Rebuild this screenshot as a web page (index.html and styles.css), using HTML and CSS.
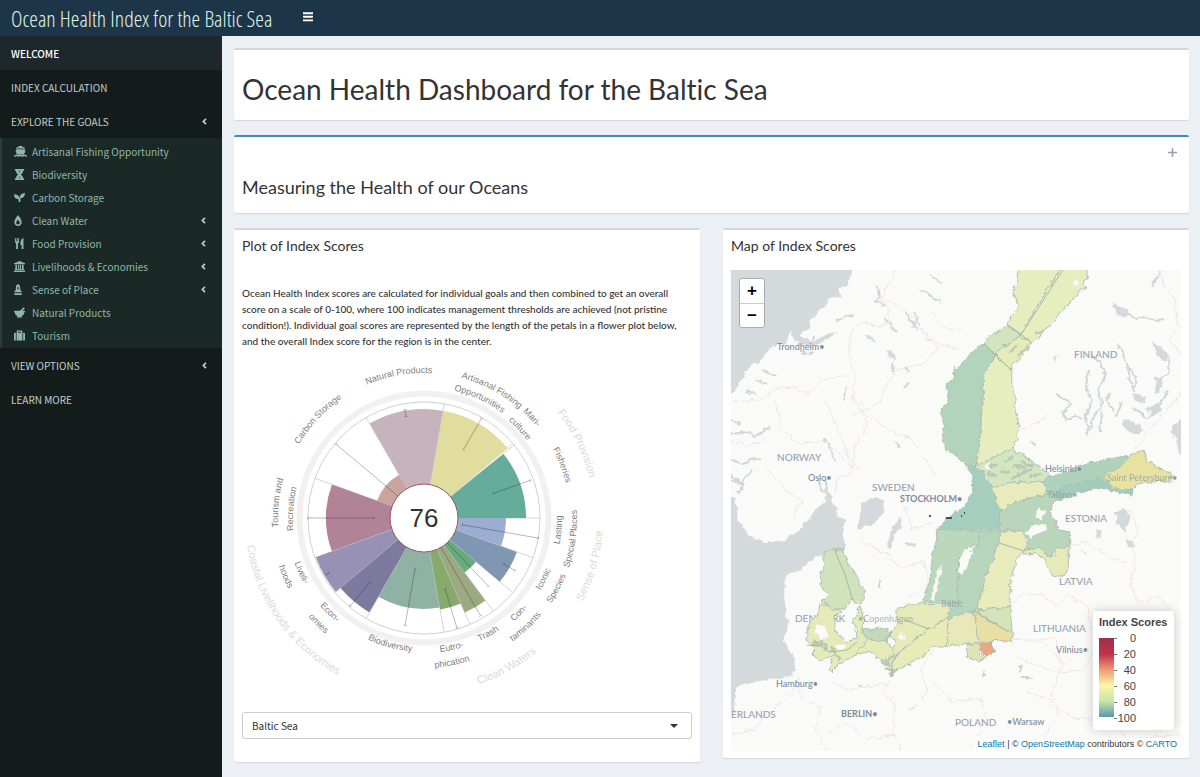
FILE: index.html
```html
<!DOCTYPE html>
<html lang="en">
  <head>
    <meta charset="UTF-8" />
    <title>Ocean Health Index for the Baltic Sea</title>
    <meta name="viewport" content="width=device-width, initial-scale=1.0" />
    <link rel="stylesheet" href="styles.css">
  </head>
  <body>
    <header class="main-header">
      <a href="#" class="logo">Ocean Health Index for the Baltic Sea</a>
      <button class="sidebar-toggle" aria-label="Toggle navigation">
        <svg width="10" height="10" viewBox="0 0 10 10"><path d="M0 1.2h10M0 4.8h10M0 8.4h10" stroke="#fff" stroke-width="1.9" /></svg>
      </button>
    </header>

    <div class="wrapper">
      <nav class="sidebar">
        <a href="#" class="item active">WELCOME</a>
        <a href="#" class="item">INDEX CALCULATION</a>
        <a href="#" class="item">EXPLORE THE GOALS <svg class="angle" viewBox="0 0 6 8"><path d="M4.8 .8 1.6 4l3.2 3.2" /></svg></a>
        <div class="submenu">
          <a href="#"><svg class="icon wide" viewBox="0 0 14 12"><path d="M5 0h4v1.4h2.4v3L12.600 5.300 11 8.600Q9.500 9.800 8.600 8.700 7 10 5.400 8.700 4.500 9.800 3 8.600L1.400 5.300 2.600 4.400v-3H5zM4 2.800v1.200L7 3.200l3 .8V2.800zM0 10q2 0 3-1 2 1.800 4 0 2 1.800 4 0 1 1 3 1v1.700q-2 0-3-.8-2 1.500-4 0-2 1.500-4 0-1 .8-3 .8z" fill-rule="evenodd" /></svg>Artisanal Fishing Opportunity</a>
          <a href="#"><svg class="icon" viewBox="0 0 12 12"><path d="M1 0h10v1.800H1zM1 10.200h10V12H1zM2 1.500h2l2 2.600 2-2.600h2Q10 4.500 7.500 6 10 7.500 10 10.500H8L6 7.800 4 10.500H2Q2 7.500 4.500 6 2 4.500 2 1.500zM4 2.500h4v.8H4zM4 8.800h4v.8H4z" /></svg>Biodiversity</a>
          <a href="#"><svg class="icon" viewBox="0 0 12 12"><path d="M0 2.500q4.800 0 6 4Q6.500 1.200 12 1q0 5.200-5 5.800V11H5V7.800Q0 7.800 0 2.500z" /></svg>Carbon Storage</a>
          <a href="#"><svg class="icon narrow" viewBox="0 0 8 12"><path d="M4 0q4 5 4 7.600A4 4 0 0 1 4 12 4 4 0 0 1 0 7.600Q0 5 4 0zM4 5.200Q2 7.200 2 8.300A2 2 0 0 0 4 10.300 2 2 0 0 0 6 8.300Q6 7.200 4 5.200z" fill-rule="evenodd" /></svg>Clean Water <svg class="angle" viewBox="0 0 6 8"><path d="M4.800 .8 1.600 4l3.200 3.200" /></svg></a>
          <a href="#"><svg class="icon" viewBox="0 0 12 12"><path d="M1 0h1v3.500h.8V0h1v3.500h.8V0h1v4.500L4.300 6v6H2.300V6L1 4.500zM7 6.500Q7 1 10.300 0v12H8.300V7.500H7z" /></svg>Food Provision <svg class="angle" viewBox="0 0 6 8"><path d="M4.800 .8 1.600 4l3.200 3.200" /></svg></a>
          <a href="#"><svg class="icon" viewBox="0 0 12 12"><path d="M6 0l6 2.500v1H0v-1zM1.500 4.200h1.800V9h1.200V4.200h1.200V9h.8V4.200h1.200V9h1V4.200h1.800V9h.8v1H.7V9h.8zM0 10.600h12V12H0z" /></svg>Livelihoods &amp; Economies <svg class="angle" viewBox="0 0 6 8"><path d="M4.800 .8 1.600 4l3.200 3.200" /></svg></a>
          <a href="#"><svg class="icon narrow" viewBox="0 0 8 12"><path d="M4 0l2 1.500.8 6H8V9H0V7.500h1.200L2 1.500zM0 10h8v2H0zM3.300 3.500v2.200h1.400V3.500z" fill-rule="evenodd" /></svg>Sense of Place <svg class="angle" viewBox="0 0 6 8"><path d="M4.800 .8 1.600 4l3.200 3.200" /></svg></a>
          <a href="#"><svg class="icon" viewBox="0 0 12 12"><path d="M0 4h6.500L10.600.300l1.200 1.200L9.200 4H12v1.600h-.7Q11 8.500 8.300 9.800L9 11.500H3l.7-1.700Q1 8.500.7 5.600H0z" /></svg>Natural Products</a>
          <a href="#"><svg class="icon" viewBox="0 0 12 12"><path d="M3 3V.600h6V3h.2v8.500H2.800V3zM4.300 3h3.400V1.800H4.300zM0 4q0-1 1-1h1v8.500H1q-1 0-1-1zM12 4q0-1-1-1h-1v8.500h1q1 0 1-1z" fill-rule="evenodd" /></svg>Tourism</a>
        </div>
        <a href="#" class="item">VIEW OPTIONS <svg class="angle" viewBox="0 0 6 8"><path d="M4.800 .8 1.600 4l3.200 3.200" /></svg></a>
        <a href="#" class="item">LEARN MORE</a>
      </nav>

      <main class="content">
        <section class="box title-box">
          <h1>Ocean Health Dashboard for the Baltic Sea</h1>
        </section>

        <section class="box measure-box">
          <button class="collapse" aria-label="Expand">
            <svg width="9" height="9" viewBox="0 0 9 9"><path d="M4.500 0v9M0 4.500h9" stroke="#97a0b3" stroke-width="1.600" /></svg>
          </button>
          <h2>Measuring the Health of our Oceans</h2>
        </section>

        <div class="row">
          <section class="box plot-box">
            <h3>Plot of Index Scores</h3>
            <p>
              Ocean Health Index scores are calculated for individual goals and then combined to get an overall
              score on a scale of 0-100, where 100 indicates management thresholds are achieved (not pristine
              condition!). Individual goal scores are represented by the length of the petals in a flower plot below,
              and the overall Index score for the region is in the center.
            </p>
            <svg id="flower" class="flower" viewBox="-182 -169 450 363"></svg>
            <select class="region" aria-label="Region">
              <option>Baltic Sea</option>
            </select>
          </section>

          <section class="box map-box">
            <h3>Map of Index Scores</h3>
            <div class="map">
              <svg class="tiles" viewBox="731 270 450 481" preserveAspectRatio="xMidYMid slice">
                <defs>
                  <filter id="rough" x="-5%" y="-5%" width="110%" height="110%">
                    <feTurbulence type="fractalNoise" baseFrequency="0.16" numOctaves="3" seed="4" />
                    <feDisplacementMap in="SourceGraphic" scale="6" xChannelSelector="R" yChannelSelector="G" />
                  </filter>
                </defs>

                <!-- open water and lakes -->
                <g fill="#d4dadc" filter="url(#rough)">
                  <path d="M721 260H855L850 278 846 285 838 290 841 296 830 298 827 305 820 310 812 318 808 328 800 336 812 342 826 334 838 332 826 340 814 346 806 345 795 341 790 332 786 343 777 345 766 352 758 362 749 368 743 378 735 390 721 400z" />
                  <path d="M721 494 735 498 738 520 748 535 765 542 785 540 800 530 815 512 825 500 828 488 832 500 838 515 845 520 843 535 846 547 824 553 812 560 800 570 787 575 783 590 784 605 788 625 784 642 793 655 797 670 790 677 770 680 750 682 736 688 735 712 721 715z" />
                  <path d="M860 503 873 498 885 500 884 512 875 522 868 525 858 530 860 515zM900 517l3 3-8 15-5 14-3-4 6-17z" />
                  <path d="M1115 511l13-1 2 10-4 13-8-8zM1125 537l9 5 2 6-8-1zM1190 412l-17 13-3 6 6 8 2 14 12 4zM1096 530h4l1 6-3 3z" />
                  <path d="M1112 303l8 4 9 4-3 6-10-2zM1152 342l8 5 9 8-3 7-8-6zM1132 393l10 4 6 1-4 5-8-2zM1156 376l6 4-2 12-5 2zM1146 408l12-4 4 5-10 5zM1124 420l10 2 10 8-4 4-10 0-6-8zM886 350l10 4 1 8-8-4zM894 440l8 6-5 2zM1054 355l4 2-3 6z" />
                </g>
                <g class="lakes" filter="url(#rough)">
                  <path d="M1127 313l9 6 8-2 12 4 8-2M1090 354l10 8 6 14-8 14 4 14-10 16-4 16-2-20 6-16-6-12 2-18M1118 344l6 12 4 10 2 16 6 10M1128 366l8 12-2 14M1160 380l8-6 2-18M1056 395l16 8-10 10 4 8 8-6 8 4M1110 392l-4 10 8 8M1102 410l-2 22M1122 402l-6 14M1134 408l12 10 16-8M1168 392l-14 20" />
                  <path d="M877 285l3 10-4 6 10 6M905 312l12 18M918 316l-6 12M919 325l-4-12M884 318l12 14M866 335l8 6M892 362l2 10M905 367l4 6M905 388l4-6M847 385l-3 16M824 438l8 14 4 10M731 434l16-2 8 4 16-8M731 460l12 4 8-4 10-2M731 475l10 8 10-12M738 495l6-12-12-3M825 480l3 14-6-6M818 478l4 12M731 420l10 4M756 380l12 4M762 370l14 6M746 392l10 2M930 275l12 8M920 288l20 14M1160 272l-8 14M814 336l-2 10M836 320l18-6M800 352l12 2" />
                  <path d="M880 580l-1 8M905 543l10 2M860 685l2 3M1020 665v8M1022 678h10M984 670v6M968 435l2 6M1030 440l5 6M1083 550l2 3" />
                </g>
                <!-- country borders -->
                <g class="borders" filter="url(#rough)">
                  <path d="M895 270l-14 29 7 8 1 16-10 4-18-6-10 12-2 22 6 20-2 24 10 14 4 12-12 22-4 26-14 6-2 14" />
                  <path d="M731 402l30-2 14-12 20-1 14 8 12-16 30-3M851 395l10 8 8 14 22 14 20 8 26 38M886 300l16 8 14 12 12 20 32 10M914 320l24 28-14 16-26 5-10 12-8 22-28 12M776 400l4 26 18 18 26-4 14 12 16 18M826 400l12 30 10 26 12 14M728 440l20 6 18-6M768 470l20 22 14 8-10 16" />
                  <path d="M1160 272l4 14 10 12 4 30-8 12 11 14M1181 393l-28 34-25 30M1020 430l20-8 8-8M930 310l14 18 18 2M1130 510l8 20-4 14 0 24-4 18 8 16 22-6 16 22M1068 546l18-4 10 6 14 10 16 4M1012 606l8-10 22-2 14 12 12-10 20 10 2 24M1013 638l30 4 22 22-10 8-38-14M1036 640l20-2 6 30-10 24 6 20-14 26M1058 672l26-2 12-20" />
                  <path d="M889 680l-6 12 12 14-2 26 8 20M797 674l4 24 20 10-6 20 12 22M731 735l24-6 10-14 26-20 8-18M830 680l16 10 40-6M826 735l20-12 22 16 30-4M932 680l20 22 28-4 6 20-14 30M940 640l-20 30 8 22-20 20M1050 700l22 18 40 2 16 20 53-6M1020 690l32 10M890 560l14 8 20-8 4 24-20 14M860 540l30 16M902 500l10 30 20-8" />
                </g>

                <g class="labels">
                  <text x="777" y="350" class="city">Trondheim•</text>
                  <text x="777" y="461">NORWAY</text>
                  <text x="808" y="481" class="city">Oslo•</text>
                  <text x="872" y="491">SWEDEN</text>
                  <text x="900" y="502" class="capital">STOCKHOLM•</text>
                  <text x="1074" y="358">FINLAND</text>
                  <text x="1065" y="522">ESTONIA</text>
                  <text x="1059" y="585">LATVIA</text>
                  <text x="1033" y="632">LITHUANIA</text>
                  <text x="1056" y="653" class="city">Vilnius•</text>
                  <text x="955" y="726">POLAND</text>
                  <text x="1007" y="725" class="city">•Warsaw</text>
                  <text x="841" y="717" class="capital">BERLIN•</text>
                  <text x="776" y="687" class="city">Hamburg•</text>
                  <text x="731" y="718">ERLANDS</text>
                  <text x="795" y="622">DENMARK</text>
                </g>

                <!-- scored sea regions -->
                <g class="regions" filter="url(#rough)">
                  <path fill="#e6eec0" d="M1020 262 1017 275 1018 282 1012 288 1014 296 1019 303 1016 311 1010 317 1008 325 1020 335 1064 262z" />
                  <path fill="#e6eec0" d="M1064 262 1087 262 1087 276 1084 284 1087 288 1080 290 1076 296 1071 300 1068 306 1061 311 1057 318 1050 326 1043 330 1040 337 1031 342 1020 335z" />
                  <path fill="#d2e5bf" d="M1008 325 998 332 990 336 984 343 995 355 1003 346 1020 336z" />
                  <path fill="#e6ecb8" d="M1020 336 1031 342 1028 350 1022 356 1013 364 1011 371 995 355 1003 346z" />
                  <path fill="#b2d4bc" d="M984 343 978 348 970 354 964 362 956 371 953 366 955 378 946 385 948 397 941 413 944 425 942 438 947 450 955 455 963 462 968 466 976 466 981 430 982 400 984 375 995 355z" />
                  <path fill="#e6eec0" d="M984 375 995 355 1011 371 1012 382 1015 395 1015 410 1019 425 1017 440 1013 448 976 466 981 430 982 400z" />
                  <path fill="#d4e6c0" d="M976 466 1013 448 1016 453 1028 457 1036 465 1045 470 1050 476 1044 482 1020 482 992 487 985 477z" />
                  <path fill="#a6cebe" d="M966 465 976 466 985 477 992 487 1000 512 1000 530 975 530 937 529 945 520 955 512 965 507 968 500 972 492 973 478z" />
                  <path fill="#e8ecbc" d="M992 487 1020 482 1043 482 1048 494 1030 498 1012 503 1000 512z" />
                  <path fill="#b0d2bc" d="M1043 482 1050 476 1062 474 1075 468 1090 463 1105 460 1120 457 1130 455 1122 466 1104 477 1085 481 1065 486 1048 494z" />
                  <path fill="#a2ccbc" d="M1048 494 1065 486 1085 481 1104 478 1112 489 1133 490 1132 495 1120 493 1108 490 1090 489 1078 493 1070 498 1060 500z" />
                  <path fill="#e8e2a0" d="M1104 476 1122 466 1130 455 1144 451 1147 460 1155 466 1170 472 1175 478 1165 481 1150 482 1137 484 1133 490 1112 488z" />
                  <path fill="#b9d6bc" d="M1000 512 1014 502 1048 494 1062 500 1053 503 1050 512 1055 520 1058 530 1071 532 1069 547 1056 548 1053 556 1048 557 1040 547 1024 551 1028 544 1020 531 1000 531z" />
                  <path fill="#bcd8bc" d="M937 529 978 531 979 545 972 546 958 560 958 602 930 602 922 602 930 580 932 560 936 540z" />
                  <path fill="#b6d6bc" d="M978 531 1000 531 999 543 986 576 976 610 965 612 950 618 949 602 958 602 958 560 979 545z" />
                  <path fill="#e8ecbc" d="M1000 531 1020 531 1028 540 1024 551 1016 560 1012 575 1010 590 1010 607 976 610 986 576 999 543z" />
                  <path fill="#e6eab8" d="M1024 551 1040 547 1048 557 1056 556 1056 548 1069 547 1068 570 1062 577 1054 577 1049 570 1045 560 1037 553 1026 556z" />
                  <path fill="#d4e4b8" d="M974 611 1010 607 1012 631 1007 631z" />
                  <path fill="#e9dfa4" d="M974 611 1007 631 1013 632 1012 641 979 642z" />
                  <path fill="#e0e4b4" d="M966 645 979 643 979 652 985 658 979 662 968 657z" />
                  <path fill="#e8a882" d="M979 643 991 642 992 648 996 650 988 656 984 655 979 648z" />
                  <path fill="#e8e8b8" d="M949 618 974 611 979 642 945 647z" />
                  <path fill="#e8eab8" d="M949 617 945 647 930 647 925 655 915 660 903 667 892 672 889 664 899 652 929 629z" />
                  <path fill="#e6eab8" d="M897 610 910 604 949 603 949 617 929 629 899 652 889 665 881 663 897 641 888 637 898 622z" />
                  <path fill="#c0daba" d="M861 627 869 630 880 628 893 631 886 641 868 640 862 633z" />
                  <path fill="#e6eab8" d="M862 634 868 640 886 641 896 654 884 663 876 655 868 652 852 656 858 643z" />
                  <path fill="#d0e3bc" d="M824 552 843 548 846 560 855 572 860 585 866 592 862 602 857 603 852 600 846 608 835 609 822 602 829 595 820 585 821 575 824 565z" />
                  <path fill="#e4eab8" d="M820 603 832 608 841 611 834 616 834 628 838 636 848 641 857 638 856 628 853 622 860 606 864 620 862 633 866 641 857 652 852 658 840 664 832 672 828 670 834 656 820 660 812 655 816 648 807 640 807 630 810 622 818 617z" />
                </g>
                <g fill="#fafaf8" filter="url(#rough)">
                  <path d="M970 547l3 7-6 11-4 10-4-4 0-10 6-11zM940 564l1 8-7 27-3 1 3-18zM1026 532l9-7 11-1 1 6-10 4-6 5zM1036 512l4-4 5 4-4 8-6-2zM899 632l7 5-3 4-5-3zM816 624l9 2 4 11-7 2-8-7zM836 644l9 1-2 5-9-1zM988 463l5 4-4 4-4-3zM872 653l4 4-2 5-4-4zM1073 282l4-2 2 3-3 3z" />
                </g>
                <g class="speckles" filter="url(#rough)">
                  <path d="M990 468l8-4M1000 470l10 2M1004 462l10-6M1012 466l14 2M1016 474l16-4M1020 462l14 4M1030 476l12-2M986 472l10 4M1010 478l12-2M1010 352l8-6M1018 356l10-10M1036 334l8-4M884 660l8 6M884 668l12 4M890 676l8-6M812 642l14 4M822 640l4 10M830 646l10 14" />
                </g>
                <g class="dividers">
                  <path d="M1063 270 1020 336M1008 325l23 17M984 343l28 28M835 551l10 24 8 26M905 620l24 9M999 543l25 8M892 632l-8 9M899 652l-7 11v14M807 645l14 1 8 6 18-2 10-8M974 611l33 20" />
                </g>
                <g class="labels">
                  <text x="1045" y="472" class="city">Helsinki•</text>
                </g>
                <g class="labels faded">
                  <text x="858" y="622" class="city">•Copenhagen</text>
                  <text x="1107" y="481" class="city">Saint Petersburg•</text>
                  <text x="1047" y="498" class="city">Tallinn•</text>
                  <text x="941" y="607" class="city">Baltic</text>
                </g>
                <path d="M929 516h2M946 518h6M961 516h1M964 513h1" stroke="#222" stroke-width="1.400" />
              </svg>

              <div class="zoom-control">
                <button aria-label="Zoom in">+</button>
                <button aria-label="Zoom out">−</button>
              </div>

              <div class="legend">
                <strong>Index Scores</strong>
                <div class="scale">
                  <span class="ramp"></span>
                  <ul>
                    <li>0</li>
                    <li>20</li>
                    <li>40</li>
                    <li>60</li>
                    <li>80</li>
                    <li>100</li>
                  </ul>
                </div>
              </div>

              <div class="attribution">
                <a href="#">Leaflet</a> | © <a href="#">OpenStreetMap</a> contributors © <a href="#">CARTO</a>
              </div>
            </div>
          </section>
        </div>
      </main>
    </div>

    <script src="flower.js"></script>
  </body>
</html>
```
FILE: styles.css
```css
* {
  box-sizing: border-box;
}

body {
  margin: 0;
  min-height: 100vh;
  display: flex;
  flex-direction: column;
  font-family: "Noto Sans CJK SC", "Open Sans", sans-serif;
  font-size: 10px;
  color: #333;
  background: #ecf0f5;
}

a {
  text-decoration: none;
}

button {
  border: none;
  background: none;
  padding: 0;
  cursor: pointer;
}

.main-header {
  display: flex;
  align-items: center;
  height: 36px;
  background: #1d3549;
}

.logo {
  flex: 0 0 291px;
  padding-left: 11px;
  font-family: "Open Sans Condensed Light", "Liberation Sans Narrow", "Open Sans", sans-serif;
  font-size: 22px;
  font-weight: 300;
  line-height: 36px;
  white-space: nowrap;
  color: #e0f3e6;
}

.sidebar-toggle {
  display: flex;
  margin: 0 0 2px 12px;
}

.wrapper {
  display: flex;
  flex: 1;
}

/* Sidebar */
.sidebar {
  flex: 0 0 222px;
  background: #141c1b;
}

.sidebar .item {
  display: flex;
  align-items: center;
  justify-content: space-between;
  height: 34px;
  padding: 0 15px 0 11px;
  color: #c2cecb;
}

.sidebar .item.active {
  background: #1e282c;
  color: #fff;
  font-weight: 500;
}

.submenu {
  padding: 2px 0 1px;
  border-left: 2px solid #2c3b41;
  background: #1a2826;
}

.submenu a {
  display: flex;
  align-items: center;
  height: 23px;
  padding: 0 16px 0 12px;
  color: #8fb8ab;
}

.icon {
  width: 11px;
  height: 11px;
  margin-right: 7px;
  fill: #8fb8ab;
}

.icon.wide {
  width: 13px;
  margin-right: 5px;
}

.icon.narrow {
  width: 8px;
  margin-right: 10px;
}

.angle {
  width: 5px;
  height: 7px;
  margin-left: auto;
  fill: none;
  stroke: #c2cecb;
  stroke-width: 2;
}

/* Content */
.content {
  flex: 1;
  min-width: 0;
  padding: 12px 11px 11px 12px;
}

.box {
  position: relative;
  margin-bottom: 15px;
  padding: 0 8px;
  border-top: 2px solid #d2d6de;
  border-radius: 2px;
  background: #fff;
  box-shadow: 0 1px 1px rgba(0, 0, 0, 0.1);
}

h1,
h2,
h3 {
  margin: 0;
  font-family: Lato, sans-serif;
  font-weight: 400;
  font-variant-ligatures: none;
}

h1 {
  padding: 23px 0 15px;
  font-size: 28px;
  line-height: 32px;
}

h2 {
  font-size: 18px;
  line-height: 24px;
}

h3 {
  font-size: 14px;
  line-height: 16px;
}

.measure-box {
  padding-top: 38px;
  padding-bottom: 14px;
  border-top-color: #3c8dbc;
}

.collapse {
  position: absolute;
  top: 11px;
  right: 12px;
  display: flex;
}

.row {
  display: grid;
  grid-template-columns: 1fr 1fr;
  gap: 23px;
  align-items: start;
}

.row .box {
  margin: 0;
  padding-top: 8px;
}

.plot-box {
  padding-bottom: 23px;
}

.plot-box p {
  margin: 31px 0 0;
  font-family: Lato, sans-serif;
  font-weight: 500;
  line-height: 16px;
}

.flower {
  display: block;
  width: 100%;
}

.flower text {
  font-family: "Liberation Sans", Arial, sans-serif;
  font-size: 9px;
  text-anchor: middle;
  fill: #808080;
}

.flower .group {
  font-size: 11px;
  fill: #dadada;
}

.flower .score {
  font-size: 26px;
  fill: #333;
}

.region {
  display: block;
  width: 100%;
  height: 27px;
  padding: 0 9px;
  border: 1px solid #ccc;
  border-radius: 3px;
  appearance: none;
  font: inherit;
  color: #333;
  background: #fff;
}

.plot-box::after {
  content: "";
  position: absolute;
  right: 22px;
  bottom: 34px;
  border: 4px solid transparent;
  border-top-color: #333;
  border-bottom: none;
}

/* Map */
.map-box {
  padding-bottom: 7px;
}

.map {
  position: relative;
  margin-top: 16px;
  font-family: "Liberation Sans", Arial, sans-serif;
}

.tiles {
  display: block;
  width: 100%;
  background: #fafaf8;
}

.lakes {
  fill: none;
  stroke: #d0d6d9;
  stroke-width: 2;
}

.borders {
  fill: none;
  stroke: #efe4e5;
  stroke-width: 1;
}

.regions {
  stroke: #aebfb1;
  stroke-width: 1;
}

.speckles {
  fill: none;
  stroke: #b8c9b6;
  stroke-width: 3;
}

.dividers {
  fill: none;
  stroke: #a6b7ab;
  stroke-width: 1;
}

.labels {
  font-family: Lato, sans-serif;
  font-size: 10px;
  font-weight: 500;
  fill: #98a2b0;
}

.labels .city {
  font-size: 9px;
  fill: #7f8b9b;
}

.labels .capital {
  font-size: 9px;
  font-weight: 700;
  fill: #7f8b9c;
}

.faded {
  opacity: 0.6;
}

.zoom-control {
  position: absolute;
  top: 8px;
  left: 8px;
  width: 26px;
  border: 1px solid #a9adae;
  border-radius: 3px;
  background: #fff;
}

.zoom-control button {
  display: block;
  width: 100%;
  height: 24px;
  font: bold 17px/24px "Liberation Sans", Arial, sans-serif;
  color: #000;
}

.zoom-control button + button {
  border-top: 1px solid #ccc;
}

.legend {
  position: absolute;
  right: 7px;
  bottom: 21px;
  width: 81px;
  height: 119px;
  padding: 5px 6px;
  border-radius: 4px;
  background: rgba(255, 255, 255, 0.9);
  box-shadow: 0 0 12px rgba(0, 0, 0, 0.2);
  font-size: 11px;
  color: #444;
  white-space: nowrap;
}

.legend strong {
  display: block;
  line-height: 13px;
}

.scale {
  display: flex;
  margin-top: 1px;
}

.ramp {
  width: 15px;
  height: 79px;
  margin-top: 8px;
  background: linear-gradient(#9e2f4c, #c2304c 20%, #ee9a75 40%, #fbf6a6 60%, #c9e5a6 80%, #5b96ad);
}

.scale ul {
  margin: 0;
  padding: 0;
  list-style: none;
}

.scale li {
  width: 22px;
  height: 16px;
  line-height: 16px;
  text-align: right;
  background: linear-gradient(#777, #777) 0 8px / 3px 1px no-repeat;
}

.attribution {
  position: absolute;
  right: 0;
  bottom: 0;
  padding: 0 4px;
  font-size: 9px;
  line-height: 13px;
  background: rgba(255, 255, 255, 0.7);
}

.attribution a {
  color: #0078a8;
}
```
FILE: flower.js
```js
const svg = document.getElementById("flower");

const INNER = 34;
const OUTER = 116;

// from/to in degrees counter-clockwise from east, r = petal length, bar = error bar
const petals = [
  { from: 0, to: 39, r: 102, color: "#65ac9a", bar: [74, 113] },
  { from: 40, to: 80, r: 109, color: "#e1dd9e", bar: [79, 115] },
  { from: 80, to: 120, r: 109, color: "#c7b3bd", bar: [103, 110] },
  { from: 120, to: 160, r: 50, color: "#cba39f", bar: [34, 115] },
  { from: 160, to: 200, r: 98, color: "#b08496", bar: [50, 116] },
  { from: 200, to: 220, r: 115, color: "#9791b4", bar: [110, 113] },
  { from: 220, to: 240, r: 109, color: "#7c7a9f", bar: [84, 115] },
  { from: 240, to: 280, r: 91, color: "#8fb2a5", bar: [51, 109] },
  { from: 280, to: 293.3, r: 93, color: "#86aa6c", bar: [74, 115] },
  { from: 293.3, to: 306.7, r: 103, color: "#9ca982", bar: [34, 113] },
  { from: 306.7, to: 320, r: 68, color: "#67aa7c", bar: [34, 94] },
  { from: 320, to: 340, r: 99, color: "#8097b4", bar: [92, 105] },
  { from: 340, to: 360, r: 82, color: "#9cadd2", bar: [39, 116] },
];

// text, angle, baseline radius
const labels = [
  ["Natural Products", 100, 145],
  ["Carbon Storage", 137, 145],
  ["Tourism and", 174, 146],
  ["Recreation", 176, 131],
  ["Artisanal Fishing", 62, 145],
  ["Opportunities", 65, 131],
  ["Mari-", 43, 145],
  ["culture", 43, 129],
  ["Fisheries", 21, 146],
  ["Lasting", -5, 138],
  ["Special Places", -8, 153],
  ["Iconic", -27, 137],
  ["Species", -28, 153],
  ["Con-", -45, 137],
  ["taminants", -47, 152],
  ["Trash", -61, 135],
  ["Eutro-", -78, 135],
  ["phication", -79, 150],
  ["Biodiversity", -105, 134],
  ["Econ-", -135, 136],
  ["omies", -135, 152],
  ["Liveli-", -156, 137],
  ["hoods", -157, 153],
  ["Food Provision", 26, 170, "group"],
  ["Sense of Place", -16, 179, "group"],
  ["Clean Waters", -61, 175, "group"],
  ["Coastal Livelihoods & Economies", -145, 179, "group"],
];

function point(angle, r) {
  const a = (angle * Math.PI) / 180;
  return [(r * Math.cos(a)).toFixed(2), (-r * Math.sin(a)).toFixed(2)];
}

function line(a1, r1, a2, r2, color) {
  return `<path d="M${point(a1, r1)}L${point(a2, r2)}" stroke="${color}" fill="none" stroke-width="0.8" />`;
}

let out = `<circle r="124.500" fill="none" stroke="#f1f1f1" stroke-width="6" />`;
out += `<circle r="${OUTER}" fill="none" stroke="#c4c4c4" stroke-width="0.8" />`;

petals.forEach((p) => {
  out += line(p.from, INNER, p.from, OUTER, "#ccc");
  out += `<path fill="${p.color}" d="M${point(p.from, INNER)}L${point(p.from, p.r)}A${p.r} ${p.r} 0 0 0 ${point(p.to, p.r)}L${point(p.to, INNER)}z" />`;
});
out += line(39, INNER, 39, OUTER, "#ccc");

petals.forEach((p) => {
  const mid = (p.from + p.to) / 2;
  out += `<g opacity="0.4">` + line(mid, p.bar[0], mid, p.bar[1], "#222");
  p.bar.forEach((r) => {
    out += line(mid - 80 / r, r, mid + 80 / r, r, "#222");
  });
  out += `</g>`;
});

labels.forEach(([text, angle, r, cls], i) => {
  // labels in the lower half run the other way so they stay upright
  const dir = angle > 0 ? 1 : -1;
  const start = point(angle + 60 * dir, r);
  const end = point(angle - 60 * dir, r);
  out += `<path id="arc${i}" fill="none" d="M${start}A${r} ${r} 0 0 ${dir > 0 ? 1 : 0} ${end}" />`;
  out += `<text class="${cls || "goal"}"><textPath href="#arc${i}" startOffset="50%">${text.replace("&", "&amp;")}</textPath></text>`;
});

out += `<circle r="${INNER}" fill="#fff" stroke="#96536a" />`;
out += `<text class="score" y="9">76</text>`;
svg.innerHTML = out;
```
